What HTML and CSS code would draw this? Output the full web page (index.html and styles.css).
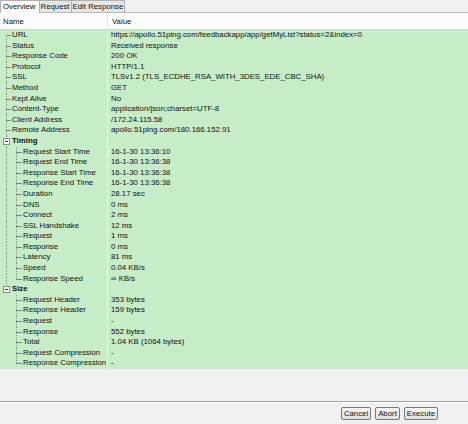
FILE: index.html
```html
<!DOCTYPE html>
<html>
<head>
<meta charset="utf-8">
<link rel="stylesheet" href="styles.css">
</head>
<body>
<div class="app">
  <div class="tabs">
    <div class="tab active">Overview</div>
    <div class="tab">Request</div>
    <div class="tab">Edit Response</div>
  </div>
  <div class="panel">
    <div class="head">
      <div class="hname">Name</div>
      <div class="hvalue">Value</div>
    </div>
    <div class="tree">
      <div class="row"><div class="name"><span class="g f"></span><span class="lbl">URL</span></div><div class="val">https://apollo.51ping.com/feedbackapp/app/getMyList?status=2&amp;index=0</div></div>
      <div class="row"><div class="name"><span class="g t"></span><span class="lbl">Status</span></div><div class="val">Received response</div></div>
      <div class="row"><div class="name"><span class="g t"></span><span class="lbl">Response Code</span></div><div class="val">200 OK</div></div>
      <div class="row"><div class="name"><span class="g t"></span><span class="lbl">Protocol</span></div><div class="val">HTTP/1.1</div></div>
      <div class="row"><div class="name"><span class="g t"></span><span class="lbl">SSL</span></div><div class="val">TLSv1.2 (TLS_ECDHE_RSA_WITH_3DES_EDE_CBC_SHA)</div></div>
      <div class="row"><div class="name"><span class="g t"></span><span class="lbl">Method</span></div><div class="val">GET</div></div>
      <div class="row"><div class="name"><span class="g t"></span><span class="lbl">Kept Alive</span></div><div class="val">No</div></div>
      <div class="row"><div class="name"><span class="g t"></span><span class="lbl">Content-Type</span></div><div class="val">application/json;charset=UTF-8</div></div>
      <div class="row"><div class="name"><span class="g t"></span><span class="lbl">Client Address</span></div><div class="val">/172.24.115.58</div></div>
      <div class="row"><div class="name"><span class="g t"></span><span class="lbl">Remote Address</span></div><div class="val">apollo.51ping.com/180.166.152.91</div></div>
      <div class="row"><div class="name"><span class="g v xp"><span class="box"></span></span><span class="lbl b">Timing</span></div><div class="val"></div></div>
      <div class="row"><div class="name"><span class="g v"></span><span class="g2 t"></span><span class="lbl">Request Start Time</span></div><div class="val">16-1-30 13:36:10</div></div>
      <div class="row"><div class="name"><span class="g v"></span><span class="g2 t"></span><span class="lbl">Request End Time</span></div><div class="val">16-1-30 13:36:38</div></div>
      <div class="row"><div class="name"><span class="g v"></span><span class="g2 t"></span><span class="lbl">Response Start Time</span></div><div class="val">16-1-30 13:36:38</div></div>
      <div class="row"><div class="name"><span class="g v"></span><span class="g2 t"></span><span class="lbl">Response End Time</span></div><div class="val">16-1-30 13:36:38</div></div>
      <div class="row"><div class="name"><span class="g v"></span><span class="g2 t"></span><span class="lbl">Duration</span></div><div class="val">28.17 sec</div></div>
      <div class="row"><div class="name"><span class="g v"></span><span class="g2 t"></span><span class="lbl">DNS</span></div><div class="val">0 ms</div></div>
      <div class="row"><div class="name"><span class="g v"></span><span class="g2 t"></span><span class="lbl">Connect</span></div><div class="val">2 ms</div></div>
      <div class="row"><div class="name"><span class="g v"></span><span class="g2 t"></span><span class="lbl">SSL Handshake</span></div><div class="val">12 ms</div></div>
      <div class="row"><div class="name"><span class="g v"></span><span class="g2 t"></span><span class="lbl">Request</span></div><div class="val">1 ms</div></div>
      <div class="row"><div class="name"><span class="g v"></span><span class="g2 t"></span><span class="lbl">Response</span></div><div class="val">0 ms</div></div>
      <div class="row"><div class="name"><span class="g v"></span><span class="g2 t"></span><span class="lbl">Latency</span></div><div class="val">81 ms</div></div>
      <div class="row"><div class="name"><span class="g v"></span><span class="g2 t"></span><span class="lbl">Speed</span></div><div class="val">0.04 KB/s</div></div>
      <div class="row"><div class="name"><span class="g v"></span><span class="g2 l"></span><span class="lbl">Response Speed</span></div><div class="val">∞ KB/s</div></div>
      <div class="row"><div class="name"><span class="g up xp"><span class="box"></span></span><span class="lbl b">Size</span></div><div class="val"></div></div>
      <div class="row"><div class="name"><span class="g"></span><span class="g2 t"></span><span class="lbl">Request Header</span></div><div class="val">353 bytes</div></div>
      <div class="row"><div class="name"><span class="g"></span><span class="g2 t"></span><span class="lbl">Response Header</span></div><div class="val">159 bytes</div></div>
      <div class="row"><div class="name"><span class="g"></span><span class="g2 t"></span><span class="lbl">Request</span></div><div class="val">-</div></div>
      <div class="row"><div class="name"><span class="g"></span><span class="g2 t"></span><span class="lbl">Response</span></div><div class="val">552 bytes</div></div>
      <div class="row"><div class="name"><span class="g"></span><span class="g2 t"></span><span class="lbl">Total</span></div><div class="val">1.04 KB (1064 bytes)</div></div>
      <div class="row"><div class="name"><span class="g"></span><span class="g2 t"></span><span class="lbl">Request Compression</span></div><div class="val">-</div></div>
      <div class="row"><div class="name"><span class="g"></span><span class="g2 l"></span><span class="lbl">Response Compression</span></div><div class="val">-</div></div>
    </div>
    <div class="fill"></div>
  </div>
  <div class="footer">
    <button class="btn">Cancel</button>
    <button class="btn">Abort</button>
    <button class="btn">Execute</button>
  </div>
</div>
</body>
</html>
```
FILE: styles.css
```css
html, body {
  margin: 0;
  padding: 0;
  background: #f0f0f0;
}
body {
  font-family: "Liberation Sans", Arial, sans-serif;
  font-size: 7.8px;
  color: #111;
}
.app {
  width: 468px;
  height: 424px;
  display: flex;
  flex-direction: column;
}
.tabs {
  display: flex;
  height: 13px;
  align-items: stretch;
  border-bottom: 1px solid #b9b9b9;
  box-sizing: border-box;
}
.tab {
  padding: 0 1px;
  line-height: 12px;
  border: 1px solid #b0b0b0;
  border-bottom: none;
  background: #e6e6e6;
  font-size: 7.8px;
}
.tab + .tab {
  border-left: none;
}
.tab.active {
  background: #fbfbfb;
  margin-bottom: -1px;
  padding: 0 3px 0 2px;
}
.panel {
  flex: 1;
  display: flex;
  flex-direction: column;
  background: #f0f0f0;
}
.head {
  display: grid;
  grid-template-columns: 108px 1fr;
  height: 17px;
  background: #fdfdfd;
  border-bottom: 1px solid #d5d5d5;
  box-sizing: border-box;
  align-items: center;
}
.hname {
  padding-left: 3px;
  border-right: 1px solid #e3e3e3;
  height: 100%;
  line-height: 17px;
  box-sizing: border-box;
}
.hvalue {
  padding-left: 4px;
  line-height: 17px;
}
.tree {
  background: #c6ecc8;
  display: flex;
  flex-direction: column;
}
.row {
  display: grid;
  grid-template-columns: 108px 1fr;
  height: 10.6px;
}
.name {
  display: flex;
  align-items: stretch;
  border-right: 1px solid #e4f5e4;
  overflow: hidden;
  white-space: nowrap;
}
.val {
  padding-left: 3px;
  line-height: 10.6px;
  white-space: nowrap;
  overflow: hidden;
}
.lbl {
  line-height: 10.6px;
  padding-left: 1px;
}
.lbl.b {
  font-weight: bold;
}
.g, .g2 {
  flex: none;
  --x: 6px;
  --dv: repeating-linear-gradient(to bottom, #8a948a 0 1px, transparent 1px 2px);
  --dh: linear-gradient(#7d867d, #7d867d);
  background-repeat: no-repeat;
}
.g { width: 11px; }
.g2 { width: 11px; --x: 5px; }
.t {
  background-image: var(--dv), var(--dh);
  background-size: 1px 100%, 6px 1px;
  background-position: var(--x) 0, var(--x) 5px;
}
.f {
  background-image: var(--dv), var(--dh);
  background-size: 1px 50%, 6px 1px;
  background-position: var(--x) 100%, var(--x) 5px;
}
.l {
  background-image: var(--dv), var(--dh);
  background-size: 1px 5px, 6px 1px;
  background-position: var(--x) 0, var(--x) 5px;
}
.v {
  background-image: var(--dv);
  background-size: 1px 100%;
  background-position: var(--x) 0;
}
.up {
  background-image: var(--dv);
  background-size: 1px 50%;
  background-position: var(--x) 0;
}
.xp {
  display: flex;
  align-items: center;
  padding-left: 3px;
  box-sizing: border-box;
}
.box {
  width: 7px;
  height: 7px;
  box-sizing: border-box;
  border: 1px solid #8c8c8c;
  background: linear-gradient(#333, #333) no-repeat center / 3px 1px, #fff;
}
.fill {
  flex: 1;
  border-bottom: 1px solid #a0a0a0;
}
.footer {
  height: 22px;
  border-top: 1px solid #ffffff;
  display: flex;
  justify-content: flex-end;
  align-items: center;
  gap: 4px;
  padding-right: 30px;
  box-sizing: border-box;
}
.btn {
  font-family: "Liberation Sans", Arial, sans-serif;
  font-size: 7.8px;
  height: 13px;
  padding: 0 2px;
  border: 1px solid #7a7a7a;
  border-radius: 2px;
  background: linear-gradient(#f6f6f6, #dedede);
  color: #111;
  line-height: 10px;
}
```
